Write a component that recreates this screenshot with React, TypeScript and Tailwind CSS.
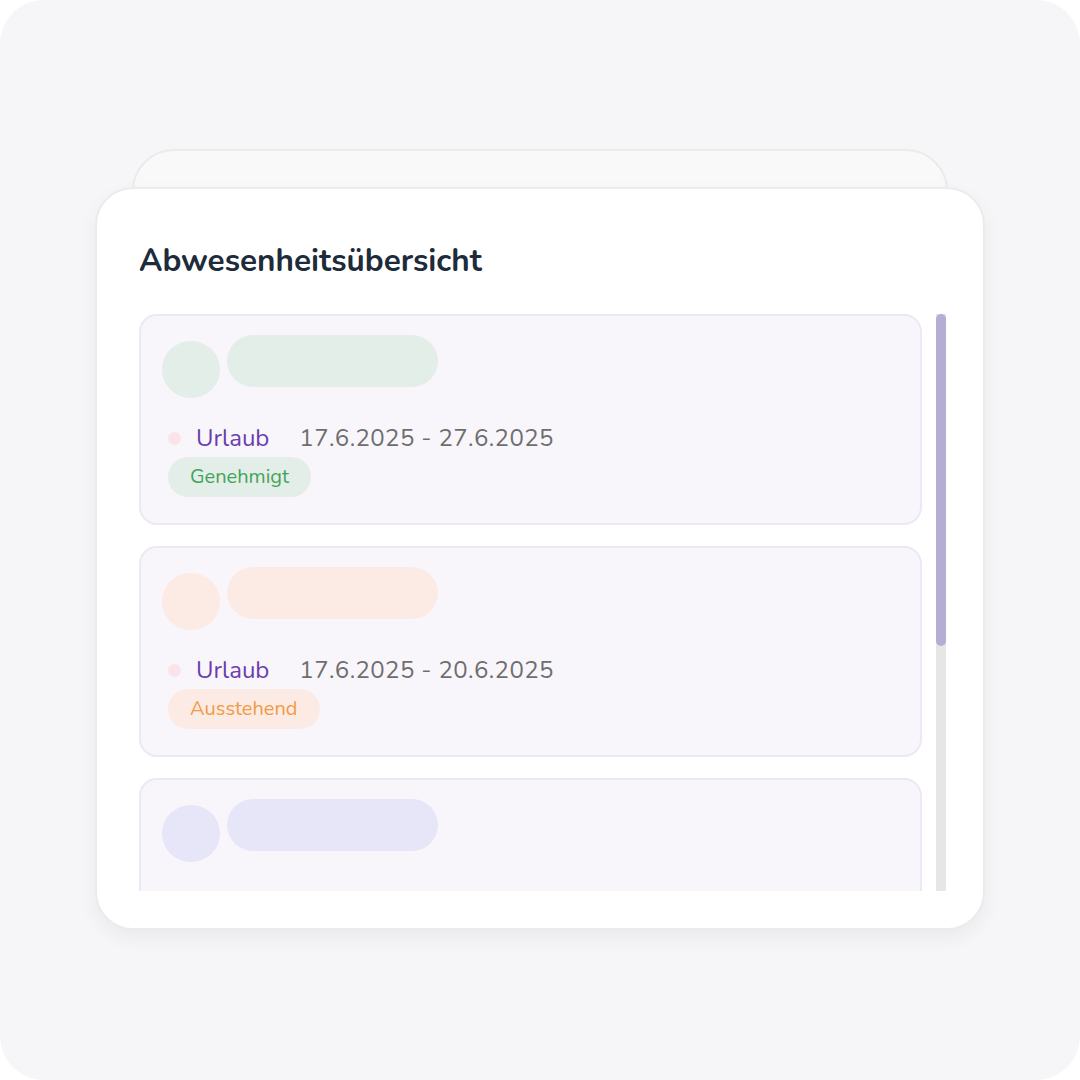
import React from "react";

const items = [
  {
    avatar: "bg-[#e4eee8]",
    from: "17.6.2025",
    to: "27.6.2025",
    status: "Genehmigt",
    badge: "bg-[#e4eee8] text-[#43a35a]",
  },
  {
    avatar: "bg-[#fbebe4]",
    from: "17.6.2025",
    to: "20.6.2025",
    status: "Ausstehend",
    badge: "bg-[#fbebe4] text-[#f39a45]",
  },
  {
    avatar: "bg-[#e6e6f8]",
    from: "",
    to: "",
    status: "",
    badge: "",
  },
];

const AbsenceItem = ({ item }: { item: (typeof items)[number] }) => {
  return (
    <div className="shrink-0 h-[211px] rounded-[18px] border-2 border-[#ece8f5] bg-[#f9f6fb] pl-[21px] pt-[19px]">
      <div className="flex gap-[7px]">
        <div className={`mt-[6px] h-[57px] w-[58px] rounded-full ${item.avatar}`} />
        <div className={`h-[52px] w-[211px] rounded-full ${item.avatar}`} />
      </div>
      {item.status && (
        <div className="pl-[6px]">
          <div className="mt-[25px] flex items-center h-[30px] text-[24px]">
            <div className="h-[13px] w-[13px] rounded-full bg-[#fbe3ea]" />
            <span className="ml-[15px] text-[#6a3eae]">Urlaub</span>
            <span className="ml-[30px] text-[#6e6e6e] tracking-[0.4px]">
              {item.from} - {item.to}
            </span>
          </div>
          <div
            className={`mt-[4px] inline-flex h-[40px] items-center rounded-full px-[22px] text-[20px] ${item.badge}`}
          >
            {item.status}
          </div>
        </div>
      )}
    </div>
  );
};

const App = () => {
  return (
    <div
      className="h-[1080px] w-[1080px] bg-white"
      style={{ fontFamily: '"Nunito", "Noto Sans", "Lato", sans-serif' }}
    >
      <div className="h-full w-full rounded-[44px] bg-[#f6f6f8] pt-[149px]">
        <div className="mx-auto h-[60px] w-[816px] rounded-t-[42px] border-2 border-[#ebebeb] bg-[#f9f9f9]" />
        <div className="relative mx-[95px] -mt-[22px] h-[743px] rounded-[38px] border-2 border-[#ebebeb] bg-white pl-[42px] pr-[37px] pt-[52px] pb-[37px] shadow-[0_8px_20px_rgba(0,0,0,0.05)]">
          <h1 className="text-[31.5px] font-bold leading-[40px] text-[#1d2b3a]">
            Abwesenheitsübersicht
          </h1>
          <div className="mt-[33px] flex h-[577px] gap-[14px]">
            <div className="flex flex-1 flex-col gap-[21px] overflow-hidden">
              {items.map((item, i) => (
                <AbsenceItem key={i} item={item} />
              ))}
            </div>
            <div className="w-[10px] bg-[#e6e6e6]">
              <div className="h-[332px] w-full rounded-full bg-[#b6add4]" />
            </div>
          </div>
        </div>
      </div>
    </div>
  );
};

export default App;
